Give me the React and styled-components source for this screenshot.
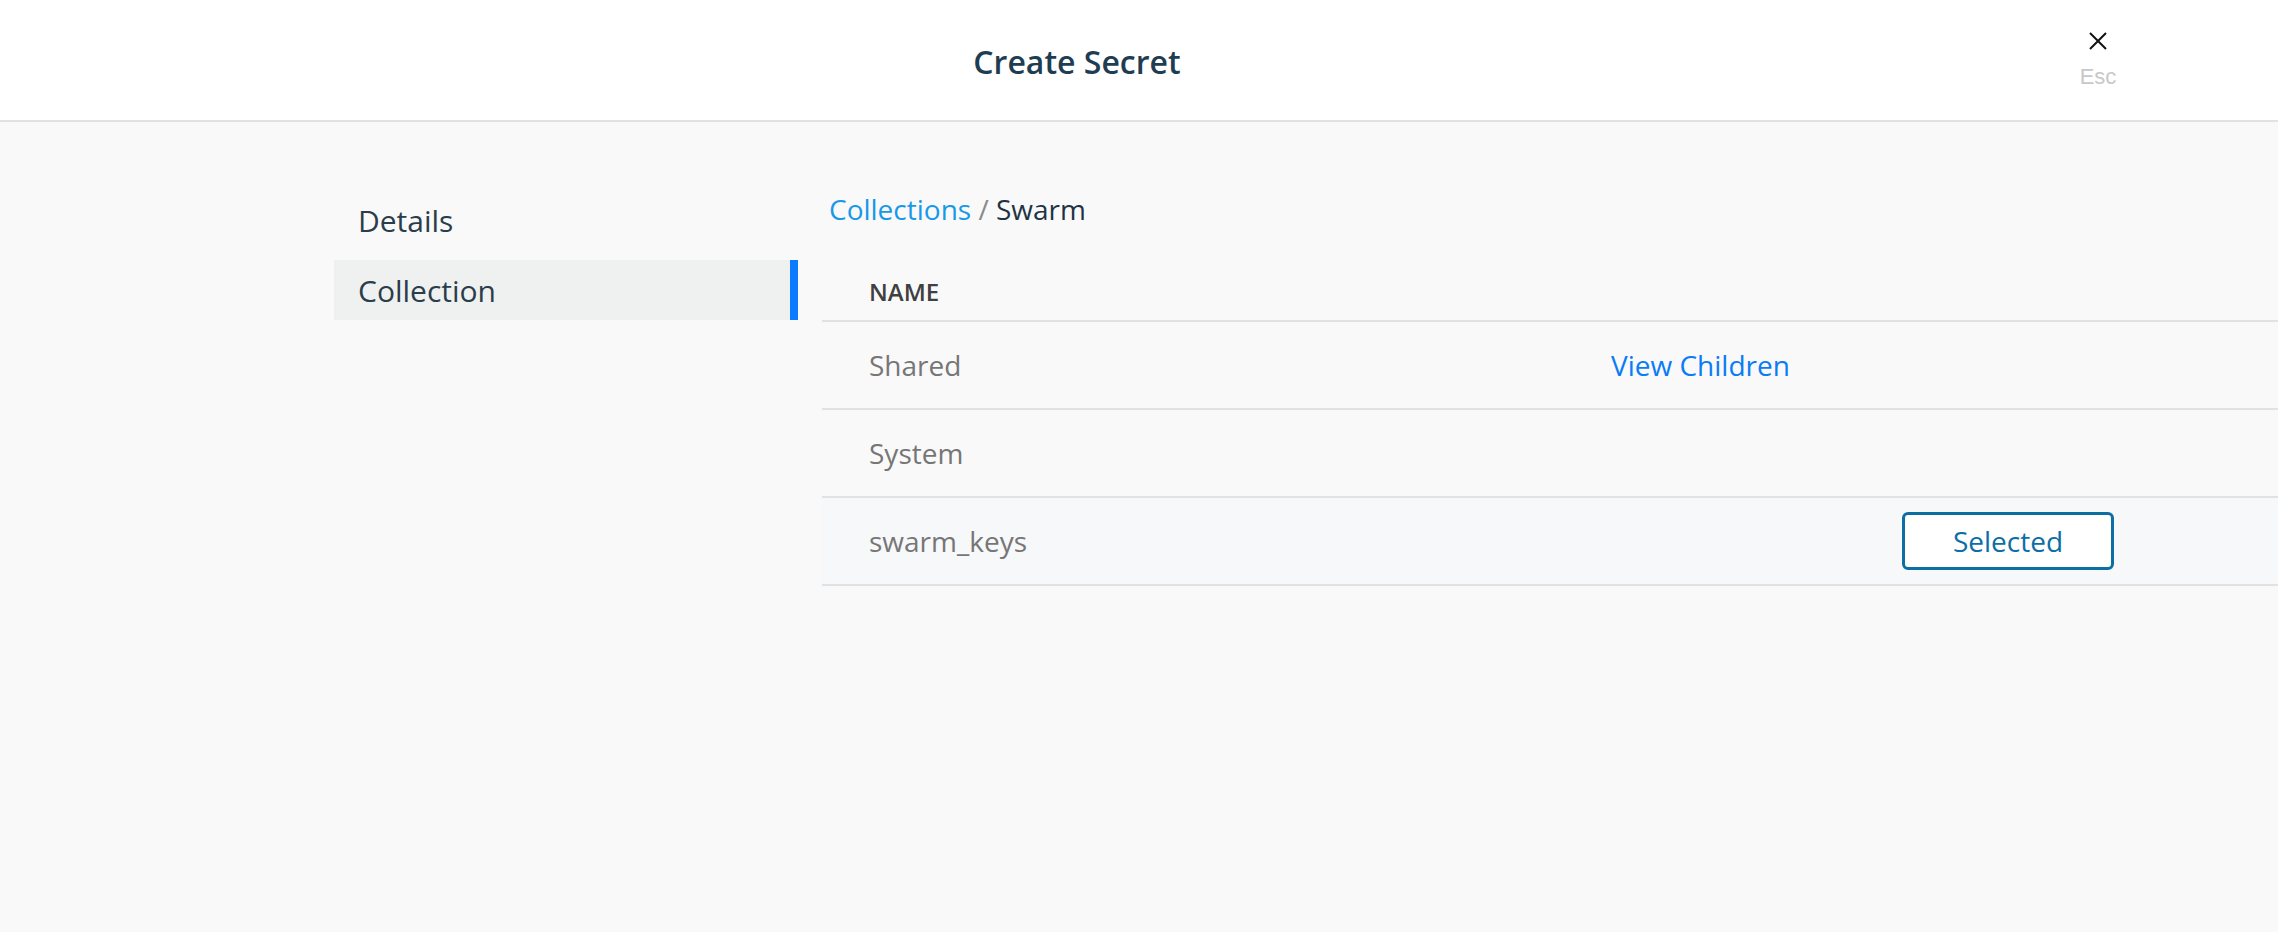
import styled, { createGlobalStyle } from "styled-components";

const GlobalStyle = createGlobalStyle`
  html, body {
    margin: 0;
    padding: 0;
    background: #f9f9f9;
  }
  body {
    font-family: "Open Sans", "Noto Sans", sans-serif;
    min-height: 932px;
  }
`;

const collections = [
  { name: "Shared", hasChildren: true },
  { name: "System" },
  { name: "swarm_keys", selected: true },
];

const App = () => {
  return (
    <>
      <GlobalStyle />
      <Page>
        <Header>
          <Title>Create Secret</Title>
          <Close>
            <svg width="18" height="18" viewBox="0 0 18 18">
              <path d="M1 1 L17 17 M17 1 L1 17" stroke="#111" strokeWidth="2" />
            </svg>
            <EscLabel>Esc</EscLabel>
          </Close>
        </Header>

        <Body>
          <Nav>
            <NavItem>Details</NavItem>
            <NavItem $active>Collection</NavItem>
          </Nav>

          <Main>
            <Breadcrumb>
              <Crumb>Collections</Crumb>
              <Slash> / </Slash>
              <Current>Swarm</Current>
            </Breadcrumb>

            <Table>
              <HeadRow>
                <HeadCell>NAME</HeadCell>
              </HeadRow>
              {collections.map((c) => (
                <Row key={c.name} $selected={c.selected}>
                  <NameCell>{c.name}</NameCell>
                  <Cell>{c.hasChildren && <ChildLink>View Children</ChildLink>}</Cell>
                  <Cell>{c.selected && <SelectButton>Selected</SelectButton>}</Cell>
                </Row>
              ))}
            </Table>
          </Main>
        </Body>
      </Page>
    </>
  );
};

export default App;

const Page = styled.div`
  min-height: 932px;
  background: #f9f9f9;
`;

const Header = styled.header`
  display: flex;
  align-items: center;
  height: 120px;
  background: #ffffff;
  border-bottom: 2px solid #dfe3e6;
`;

const Title = styled.h1`
  flex: 1;
  margin: 0;
  padding: 3px 0 0 116px;
  text-align: center;
  font-size: 32px;
  font-weight: 600;
  color: #1f3d52;
`;

const Close = styled.div`
  width: 120px;
  margin-right: 120px;
  display: flex;
  flex-direction: column;
  align-items: center;
  gap: 16px;
  cursor: pointer;

  svg {
    display: block;
  }
`;

const EscLabel = styled.span`
  font-family: "Liberation Sans", Arial, sans-serif;
  font-size: 22px;
  line-height: 22px;
  color: #c8c8c8;
`;

const Body = styled.div`
  display: flex;
  padding: 68px 0 0 334px;
`;

const Nav = styled.nav`
  width: 464px;
  display: flex;
  flex-direction: column;
  gap: 10px;
`;

const NavItem = styled.div`
  height: 60px;
  display: flex;
  align-items: center;
  padding-left: 24px;
  font-size: 30px;
  color: #2b3d4a;
  background: ${(p) => (p.$active ? "#eff1f1" : "transparent")};
  border-right: 8px solid ${(p) => (p.$active ? "#0a7bff" : "transparent")};
`;

const Main = styled.div`
  flex: 1;
  margin-left: 24px;
`;

const Breadcrumb = styled.div`
  padding-left: 7px;
  font-size: 28px;
  line-height: 38px;
  margin-bottom: 34px;
`;

const Crumb = styled.span`
  color: #1998e9;
`;

const Slash = styled.span`
  color: #8a8a8a;
  white-space: pre;
`;

const Current = styled.span`
  color: #1e3445;
`;

const Table = styled.div`
  display: flex;
  flex-direction: column;
`;

const HeadRow = styled.div`
  height: 58px;
  display: flex;
  align-items: center;
  border-bottom: 2px solid #e2e2e2;
`;

const HeadCell = styled.div`
  padding-left: 47px;
  font-size: 24px;
  font-weight: 600;
  color: #404040;
`;

const Row = styled.div`
  display: grid;
  grid-template-columns: 741px 291px 1fr;
  align-items: center;
  height: 86px;
  border-bottom: 2px solid #e2e2e2;
  background: ${(p) => (p.$selected ? "#f6f8fa" : "transparent")};
`;

const Cell = styled.div`
  padding-left: 48px;
  font-size: 28px;
`;

const NameCell = styled(Cell)`
  padding-left: 47px;
  color: #767676;
`;

const ChildLink = styled.a`
  color: #0a7cf5;
  cursor: pointer;
`;

const SelectButton = styled.button`
  width: 212px;
  height: 58px;
  display: block;
  background: #ffffff;
  border: 3px solid #0b6fa4;
  border-radius: 6px;
  font-family: "Open Sans", sans-serif;
  font-size: 28px;
  color: #0d6ea5;
  cursor: pointer;
`;
